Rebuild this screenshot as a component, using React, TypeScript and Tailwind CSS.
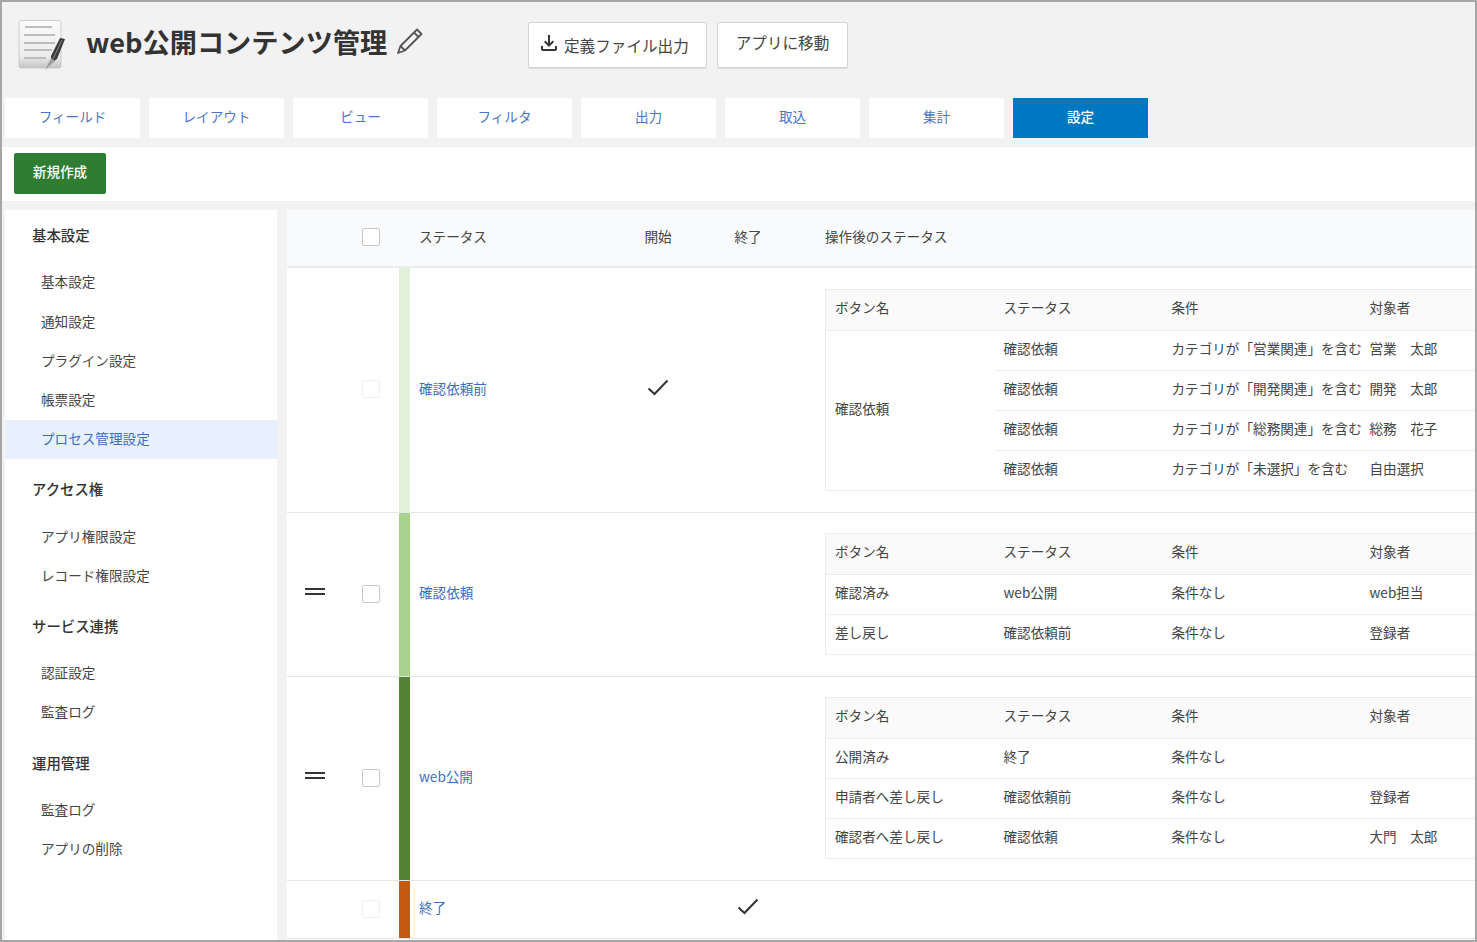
import { MdOutlineFileDownload } from "react-icons/md";

type Row = { name?: string; status: string; cond: string; user: string };

const tabs = ["フィールド", "レイアウト", "ビュー", "フィルタ", "出力", "取込", "集計", "設定"];

const menu = [
  { title: "基本設定", items: ["基本設定", "通知設定", "プラグイン設定", "帳票設定", "プロセス管理設定"] },
  { title: "アクセス権", items: ["アプリ権限設定", "レコード権限設定"] },
  { title: "サービス連携", items: ["認証設定", "監査ログ"] },
  { title: "運用管理", items: ["監査ログ", "アプリの削除"] },
];

const rows1: Row[] = [
  { status: "確認依頼", cond: "カテゴリが「営業関連」を含む", user: "営業　太郎" },
  { status: "確認依頼", cond: "カテゴリが「開発関連」を含む", user: "開発　太郎" },
  { status: "確認依頼", cond: "カテゴリが「総務関連」を含む", user: "総務　花子" },
  { status: "確認依頼", cond: "カテゴリが「未選択」を含む", user: "自由選択" },
];

const rows2: Row[] = [
  { name: "確認済み", status: "web公開", cond: "条件なし", user: "web担当" },
  { name: "差し戻し", status: "確認依頼前", cond: "条件なし", user: "登録者" },
];

const rows3: Row[] = [
  { name: "公開済み", status: "終了", cond: "条件なし", user: "" },
  { name: "申請者へ差し戻し", status: "確認依頼前", cond: "条件なし", user: "登録者" },
  { name: "確認者へ差し戻し", status: "確認依頼", cond: "条件なし", user: "大門　太郎" },
];

function DocIcon() {
  return (
    <svg width="48" height="51" viewBox="0 0 48 51" className="block">
      <defs>
        <linearGradient id="paper" x1="0" y1="0" x2="0" y2="1">
          <stop offset="0" stopColor="#fbfbfb" />
          <stop offset="0.75" stopColor="#ececec" />
          <stop offset="1" stopColor="#c4c4c4" />
        </linearGradient>
      </defs>
      <rect x="1" y="0.5" width="42" height="47.5" rx="2" fill="url(#paper)" stroke="#c4c4c4" strokeWidth="0.8" />
      <g stroke="#bdbdbd" strokeWidth="2">
        <path d="M7 7h27" />
        <path d="M6 15h31" />
        <path d="M6 23h31" />
        <path d="M6 30h28" />
        <path d="M6 38h22" />
      </g>
      <path d="M42 18l5 1-8 20-6 4 0-7z" fill="#3a3a3a" />
      <path d="M33 38l4 3-10 9z" fill="#a0a0a0" />
      <path d="M44 20l-9 19" stroke="#8a8a8a" strokeWidth="1" />
    </svg>
  );
}

function PencilIcon() {
  return (
    <svg width="28" height="28" viewBox="0 0 28 28" fill="none" stroke="#555555" strokeWidth="1.8" strokeLinejoin="round">
      <path d="M21 2.5l4.5 4.5L9 23.5 2 26l2.5-7z" />
      <path d="M18 5.5l4.5 4.5" />
      <path d="M4.5 19l4.5 4.5" />
      <path d="M7 16.5L20 4" strokeWidth="1" />
    </svg>
  );
}

function CheckMark() {
  return (
    <svg width="22" height="17" viewBox="0 0 22 17" fill="none" stroke="#333333" strokeWidth="2">
      <path d="M1.5 9.5l6 5.5L20.5 1.5" />
    </svg>
  );
}

function Box({ faint }: { faint?: boolean }) {
  return (
    <span
      className={`block w-[18px] h-[18px] rounded-[2px] bg-white border ${
        faint ? "border-[#efefef]" : "border-[#c8c8c8]"
      }`}
    />
  );
}

function Handle() {
  return (
    <span className="flex flex-col gap-[3px] w-[20px]">
      <span className="block h-[2px] bg-[#333333]" />
      <span className="block h-[2px] bg-[#333333]" />
    </span>
  );
}

function InnerHead() {
  return (
    <tr className="h-[41px] bg-[#fafafa] border-b border-[#ececec]">
      <td className="pl-[9px] pb-[5px]">ボタン名</td>
      <td className="pl-[9px] pb-[5px]">ステータス</td>
      <td className="pl-[9px] pb-[5px]">条件</td>
      <td className="pl-[10px] pb-[5px]">対象者</td>
    </tr>
  );
}

function Cols() {
  return (
    <colgroup>
      <col className="w-[169px]" />
      <col className="w-[168px]" />
      <col className="w-[197px]" />
      <col />
    </colgroup>
  );
}

function InnerTable({ rows, spanName }: { rows: Row[]; spanName?: string }) {
  return (
    <table className="w-full table-fixed border-collapse border-t border-l border-b border-[#ececec] text-[#444444]">
      <Cols />
      <tbody>
        <InnerHead />
        {rows.map((r, i) => (
          <tr key={i} className="h-[40px] border-b border-[#ececec]">
            {spanName ? (
              i === 0 && (
                <td rowSpan={rows.length} className="pl-[9px] pb-[5px] border-b border-[#ececec]">
                  {spanName}
                </td>
              )
            ) : (
              <td className="pl-[9px] pb-[5px] whitespace-nowrap">{r.name}</td>
            )}
            <td className="pl-[9px] pb-[5px] whitespace-nowrap">{r.status}</td>
            <td className="pl-[9px] pb-[5px] whitespace-nowrap">{r.cond}</td>
            <td className="pl-[10px] pb-[5px] whitespace-nowrap">{r.user}</td>
          </tr>
        ))}
      </tbody>
    </table>
  );
}

function StatusRow({
  name,
  bar,
  height,
  top,
  movable,
  start,
  end,
  children,
}: {
  name: string;
  bar: string;
  height: string;
  top?: string;
  movable?: boolean;
  start?: boolean;
  end?: boolean;
  children?: React.ReactNode;
}) {
  return (
    <div className={`grid grid-cols-[56px_56px_11px_203px_90px_90px_1fr] border-b border-[#e6e6e6] ${height}`}>
      <div className="flex items-center pl-[18px] pb-[6px]">{movable && <Handle />}</div>
      <div className="flex items-center pl-[19px] pb-[2px]">
        <Box faint={!movable} />
      </div>
      <div className={bar} />
      <div className="flex items-center pl-[9px] pb-[4px] text-[#3a6fc4]">{name}</div>
      <div className="flex items-center justify-center pb-[6px]">{start && <CheckMark />}</div>
      <div className="flex items-center justify-center pb-[7px]">{end && <CheckMark />}</div>
      <div className={`pl-[32px] ${top ?? ""}`}>{children}</div>
    </div>
  );
}

export default function App() {
  return (
    <div className="w-[1477px] h-[942px] overflow-hidden flex flex-col bg-[#f2f2f2] border-2 border-[#a6a6a6] font-['Noto_Sans_CJK_JP',sans-serif] text-[13.6px] text-[#444444]">
      {/* header */}
      <header className="h-[96px] shrink-0 flex items-start pl-[16px]">
        <div className="mt-[18px]">
          <DocIcon />
        </div>
        <div className="w-[442px] ml-[20px] mt-[17px] flex items-center gap-[9px]">
          <h1 className="text-[27.2px] leading-[44px] font-semibold text-[#333333] whitespace-nowrap">web公開コンテンツ管理</h1>
          <PencilIcon />
        </div>
        <div className="mt-[20px] flex gap-[10px]">
          <button className="w-[179px] h-[46px] bg-white border border-[#d4d4d4] rounded-[2px] shadow-[0_1px_1px_rgba(0,0,0,0.1)] flex items-center pl-[8px] gap-[3px] text-[15.6px] text-[#444444]">
            <MdOutlineFileDownload className="text-[24px] -mt-[5px] text-[#333333]" />
            <span className="pt-[1px]">定義ファイル出力</span>
          </button>
          <button className="w-[131px] h-[46px] bg-white border border-[#d4d4d4] rounded-[2px] shadow-[0_1px_1px_rgba(0,0,0,0.1)] text-[15.6px] text-[#444444] pb-[5px]">
            アプリに移動
          </button>
        </div>
      </header>

      {/* tabs */}
      <nav className="h-[49px] shrink-0 flex gap-[9px] pl-[3px]">
        {tabs.map((t) => (
          <div
            key={t}
            className={`w-[135px] h-[40px] pb-[3px] flex items-center justify-center ${
              t === "設定" ? "bg-[#0078c1] text-white font-medium" : "bg-white text-[#4a75c8]"
            }`}
          >
            {t}
          </div>
        ))}
      </nav>

      {/* toolbar */}
      <div className="h-[54px] shrink-0 bg-white pl-[12px] pt-[6px]">
        <button className="w-[92px] h-[41px] pb-[5px] bg-[#2e7d32] rounded-[2px] text-white font-medium">新規作成</button>
      </div>

      <div className="flex-1 min-h-0 flex gap-[10px] pt-[9px] pl-[3px]">
        {/* sidebar */}
        <aside className="w-[272px] shrink-0 bg-white pt-[6px]">
          {menu.map((m, mi) => (
            <section key={m.title} className={mi === 0 ? "" : "mt-[11px]"}>
              <h2
                className={`h-[38px] flex items-center pl-[27px] text-[14.4px] font-medium text-[#333333] ${
                  mi < 2 ? "pb-[1px]" : "pt-[1px]"
                }`}
              >
                {m.title}
              </h2>
              <ul className="mt-[9px]">
                {m.items.map((it) => (
                  <li
                    key={it}
                    className={`h-[39.25px] pb-[2px] flex items-center pl-[36px] ${
                      it === "プロセス管理設定" ? "bg-[#e8f0fd] text-[#3a6fc4]" : ""
                    }`}
                  >
                    {it}
                  </li>
                ))}
              </ul>
            </section>
          ))}
        </aside>

        {/* status table */}
        <main className="flex-1 min-w-0 bg-white">
          <div className="h-[58px] grid grid-cols-[56px_56px_11px_203px_90px_90px_1fr] items-center bg-[#f9fafb] border-b-2 border-[#ececec] text-[#444444]">
            <div />
            <div className="pl-[19px] pb-[2px]">
              <Box />
            </div>
            <div />
            <div className="pl-[9px] pb-[3px]">ステータス</div>
            <div className="text-center pb-[3px]">開始</div>
            <div className="text-center pb-[3px]">終了</div>
            <div className="pl-[32px] pb-[3px]">操作後のステータス</div>
          </div>
          <StatusRow name="確認依頼前" bar="bg-[#e2efda]" height="h-[245px]" top="pt-[21px]" start>
            <InnerTable rows={rows1} spanName="確認依頼" />
          </StatusRow>
          <StatusRow name="確認依頼" bar="bg-[#a9d18e]" height="h-[164px]" top="pt-[20px]" movable>
            <InnerTable rows={rows2} />
          </StatusRow>
          <StatusRow name="web公開" bar="bg-[#548235]" height="h-[204px]" top="pt-[20px]" movable>
            <InnerTable rows={rows3} />
          </StatusRow>
          <StatusRow name="終了" bar="bg-[#c55a11]" height="h-[58px]" end />
        </main>
      </div>
    </div>
  );
}
